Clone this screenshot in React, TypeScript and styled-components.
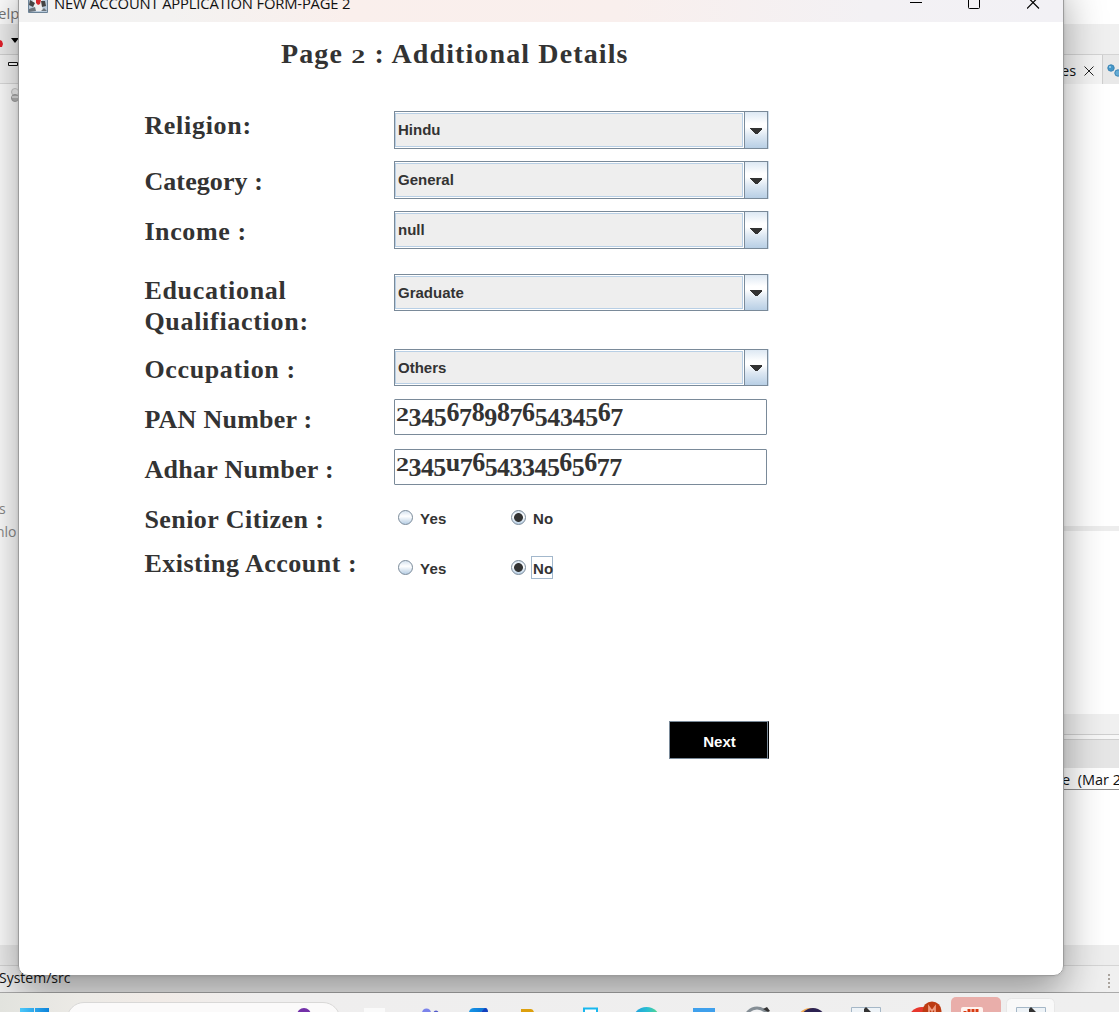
import React from 'react';
import styled, { createGlobalStyle } from 'styled-components';

const Global = createGlobalStyle`
  html, body { margin: 0; padding: 0; overflow: hidden; }
  * { box-sizing: border-box; }
`;

const ui = `"Open Sans", "Noto Sans", sans-serif`;
const serif = `"Liberation Serif", serif`;
const swing = `"Liberation Sans", Arial, sans-serif`;

const Screen = styled.div`
  position: relative;
  width: 1119px;
  height: 1012px;
  overflow: hidden;
  background: #fff;
  font-family: ${ui};
`;

const Ide = styled.div`
  display: flex;
  flex-direction: column;
  height: 993px;
`;

const Strip = styled.div<{ $h: number; $bg?: string; $line?: string }>`
  display: flex;
  flex: none;
  justify-content: space-between;
  align-items: center;
  height: ${(p) => p.$h}px;
  background: ${(p) => p.$bg ?? 'transparent'};
  border-bottom: ${(p) => (p.$line ? `1px solid ${p.$line}` : 'none')};
`;

const SideText = styled.span<{ $color?: string; $shift?: number; $size?: number }>`
  font-size: ${(p) => p.$size ?? 15}px;
  line-height: 20px;
  white-space: pre;
  color: ${(p) => p.$color ?? '#111'};
  margin-left: ${(p) => p.$shift ?? 0}px;
`;

const MenuText = styled(SideText)`
  padding-top: 2px;
`;

const Explorer = styled.div`
  display: flex;
  flex-direction: column;
  align-items: flex-start;
  align-self: flex-start;
  padding-top: 415px;
  gap: 3px;
`;

const ViewTabs = styled.div`
  display: flex;
  align-items: stretch;
  height: 29px;
  width: 57px;
`;

const ActiveTab = styled.div`
  display: flex;
  flex: none;
  align-items: center;
  width: 41px;
  gap: 8px;
  padding-top: 3px;
  background: #f5f5f5;
  border-right: 1px solid #cfcfcf;
`;

const NextTab = styled.div`
  flex: none;
  width: 16px;
  overflow: hidden;
  padding: 9px 0 0 4px;
  line-height: 0;
  background: #e9e9e9;
`;

const Console = styled.div`
  width: 57px;
  overflow: hidden;
`;

const Grip = styled.div`
  display: grid;
  gap: 2px;
  padding: 3px 9px 0 0;
  i { width: 2px; height: 2px; background: #aaa49e; }
`;

const Window = styled.div`
  position: absolute;
  left: 18px;
  top: -24px;
  width: 1046px;
  height: 1000px;
  display: flex;
  flex-direction: column;
  overflow: hidden;
  background: #fff;
  border: 1px solid #9c9c9c;
  border-radius: 10px;
`;

const Shade = styled.div`
  position: absolute;
  left: 18px;
  top: -24px;
  width: 1046px;
  height: 1000px;
  border-radius: 10px;
  box-shadow: 0 18px 42px rgba(0, 0, 0, 0.37), 0 0 3px rgba(0, 0, 0, 0.12);
`;

const TitleBar = styled.div`
  display: flex;
  flex: none;
  align-items: flex-end;
  height: 45px;
  background: linear-gradient(90deg, #f2f2f2 0, #f3f2f1 150px, #faefec 330px, #f9efed 600px, #f3f1f4 850px, #f2f1f5 100%);
`;

const AppIcon = styled.svg`
  margin: 0 6px 9px 9px;
`;

const Caption = styled.span`
  font-size: 14.8px;
  line-height: 20px;
  letter-spacing: -0.18px;
  color: #111;
  margin-bottom: 9px;
  white-space: nowrap;
`;

const Controls = styled.div`
  display: flex;
  gap: 46px;
  margin: 0 23px 9px auto;
`;

const Content = styled.main`
  display: flex;
  flex-direction: column;
  padding-left: 125px;
`;

const Heading = styled.h1`
  margin: 15px 0 35px 137px;
  font: bold 28px/33px ${serif};
  letter-spacing: 1.12px;
  color: #333;
  white-space: nowrap;
`;

const Row = styled.div<{ $h: number }>`
  display: grid;
  grid-template-columns: 250px 376px;
  align-items: start;
  height: ${(p) => p.$h}px;
`;

const Label = styled.label<{ $top: number; $ls: number }>`
  padding: ${(p) => p.$top}px 0 0 0.4px;
  font: bold 26px/31px ${serif};
  letter-spacing: ${(p) => p.$ls}px;
  color: #333;
  white-space: nowrap;
`;

const Combo = styled.div<{ $h: number }>`
  display: flex;
  width: 374px;
  height: ${(p) => p.$h}px;
  margin-top: 6px;
  border: 1px solid #7a8a99;
  box-shadow: 1px 0 0 #cfdeec;
`;

const ComboValue = styled.div`
  flex: 1;
  display: flex;
  align-items: center;
  margin: 1px 1px 1px 0;
  border: 1px solid #b8cfe5;
  background: #eee;
  padding: 0 0 0 2px;
  font: bold 15px/18px ${swing};
  color: #333;
`;

const ComboArrow = styled.div`
  display: flex;
  align-items: center;
  justify-content: center;
  width: 23px;
  padding: 1px 1px 0 0;
  border-left: 1px solid #7a8a99;
  background: linear-gradient(#dde8f3 0, #fff 32%, #fff 42%, #dce7f2 66%, #b8cfe5 100%);
`;

const Input = styled.div<{ $ls: number }>`
  width: 373px;
  height: 36px;
  margin-top: 6px;
  padding: 0 0 0 1px;
  border: 1px solid #7a8a99;
  border-radius: 1px;
  font: bold 26px/26px ${serif};
  letter-spacing: ${(p) => p.$ls}px;
  color: #333;
  white-space: nowrap;
`;

/* Old-style figures: 0-2 sit at x-height, 3 4 5 7 9 hang below the line. */
const Figure = styled.span<{ $kind: 'small' | 'low' | 'high' }>`
  display: inline-block;
  line-height: 24px;
  transform-origin: 50% 86%;
  transform: ${(p) =>
    p.$kind === 'small' ? 'scale(1, 0.7)' : p.$kind === 'low' ? 'translateY(5px)' : 'scale(1, 1.02)'};
`;

const Radios = styled.div`
  display: flex;
  align-items: center;
  height: 24px;
  margin: 13px 0 0 4px;
`;

const Choice = styled.div`
  display: flex;
  align-items: center;
  width: 113px;
  gap: 5px;
`;

const Dot = styled.span<{ $on?: boolean }>`
  width: 15px;
  height: 15px;
  margin-bottom: 1px;
  border: 1px solid #7a8a99;
  border-radius: 50%;
  background: ${(p) => (p.$on ? 'radial-gradient(circle, #333 0 4px, transparent 4.8px),' : '')}
    linear-gradient(#d6e3f0, #fff 40%, #b8cfe5);
`;

const ChoiceText = styled.span<{ $focus?: boolean }>`
  width: ${(p) => (p.$focus ? '22px' : 'auto')};
  height: 23px;
  margin-bottom: 2px;
  padding: 2px 0 0 1px;
  border: 1px solid ${(p) => (p.$focus ? '#a3b8cc' : 'transparent')};
  font: bold 15px/20px ${swing};
  letter-spacing: 0.2px;
  color: #333;
`;

const NextButton = styled.button`
  width: 100px;
  height: 38px;
  margin: 123px 0 0 525px;
  padding: 4px 0 0 1px;
  border: 1px solid #7a8a99;
  border-right-color: #000;
  box-shadow: inset -1px 0 0 #7a8a99;
  background: #000;
  color: #fff;
  font: bold 15px/18px ${swing};
`;

const Taskbar = styled.div`
  position: relative;
  height: 19px;
  overflow: hidden;
  background: linear-gradient(90deg, #e2e3de, #eceae6 80px, #f1ebe7 160px, #efeeee 260px, #efefef);
  svg { display: block; }
`;

/* Status text is painted above the dialog and its drop shadow. */
const Overlay = styled.div`
  position: absolute;
  z-index: 1;
  left: 0;
  top: 966px;
`;

const PackageMark = styled.svg`
  position: absolute;
  left: 10px;
  top: 88px;
`;

function OldStyle({ text }: { text: string }) {
  return (
    <>
      {[...text].map((c, i) => {
        if (c < '0' || c > '9') return <React.Fragment key={i}>{c}</React.Fragment>;
        const kind = '012'.includes(c) ? 'small' : '34579'.includes(c) ? 'low' : 'high';
        return <Figure key={i} $kind={kind}>{c}</Figure>;
      })}
    </>
  );
}

function Select({ value, h }: { value: string; h: number }) {
  return (
    <Combo $h={h}>
      <ComboValue>{value}</ComboValue>
      <ComboArrow>
        <svg width="12" height="6" shapeRendering="crispEdges"><path d="M0 0h12v1L7 6H5L0 1z" fill="#333" /></svg>
      </ComboArrow>
    </Combo>
  );
}

function YesNo({ focus }: { focus?: boolean }) {
  return (
    <Radios>
      <Choice><Dot /><ChoiceText>Yes</ChoiceText></Choice>
      <Choice><Dot $on /><ChoiceText $focus={focus}>No</ChoiceText></Choice>
    </Radios>
  );
}

function TaskIcons() {
  return (
    <svg width="1119" height="19">
      <defs>
        <linearGradient id="win"><stop stopColor="#4cc8fa" /><stop offset="1" stopColor="#0c83da" /></linearGradient>
        <linearGradient id="edge"><stop stopColor="#1e9be0" /><stop offset=".55" stopColor="#2bc0d0" /><stop offset="1" stopColor="#5edb79" /></linearGradient>
        <linearGradient id="book"><stop stopColor="#1797e8" /><stop offset="1" stopColor="#0b6fd0" /></linearGradient>
      </defs>
      <path d="M20 15h14v4H20zM35 15h14v4H35z" fill="url(#win)" />
      <rect x="67" y="9.500" width="273" height="34" rx="17" fill="#fbfafa" stroke="#d9d8d7" />
      <circle cx="304" cy="22" r="7" fill="#7330a8" />
      <path d="M364 15h21v4h-21z" fill="#fafafa" />
      <circle cx="426.500" cy="20" r="4.500" fill="#7b83eb" /><circle cx="436" cy="20" r="2.500" fill="#5059c9" />
      <path d="M469 19q1-4 5-4h13l-6 4z" fill="url(#book)" /><path d="M481 19l4-4q3 0 3 4z" fill="#1340be" />
      <path d="M521 16h10q2 0 3 3h-13z" fill="#dda00e" />
      <path d="M584 20v-4.500h13V20" fill="#fff" stroke="#18b7ee" strokeWidth="2" />
      <circle cx="646.500" cy="28" r="14" fill="url(#edge)" />
      <path d="M693 15h22v4h-22z" fill="#3fa0ec" />
      <circle cx="757" cy="27" r="12" fill="#f0f1f2" stroke="#858e95" strokeWidth="3" /><path d="M763 16l4-2 3 4-2 1z" fill="#333" />
      <circle cx="810" cy="28" r="13" fill="#f4ad57" /><circle cx="813" cy="28" r="13" fill="#2c2251" />
      <path d="M851.500 20v-5.500h29V20" fill="#eef3f7" stroke="#a5b7c7" /><path d="M864 19v-3l2-2 5 5z" fill="#333" />
      <circle cx="922" cy="28" r="14" fill="#e8372c" /><circle cx="932" cy="18" r="9.500" fill="#bd3b12" />
      <path d="M929 20v-6l3 4 3-4v6" fill="none" stroke="#ef9b7f" strokeWidth="1.800" />
      <rect x="951" y="4" width="50" height="24" rx="5" fill="#e9aeaa" /><rect x="961" y="14" width="22" height="12" rx="2" fill="#fff3ef" />
      <path d="M965 19v-1M969 19v-3M973 19v-3M977 19v-3" stroke="#d83b12" strokeWidth="3" />
      <rect x="1006.500" y="5.500" width="48" height="24" rx="5" fill="#f9f9f9" stroke="#e7e7e7" />
      <path d="M1016.500 20v-5.500h29V20" fill="#eef3f7" stroke="#a5b7c7" /><path d="M1029 19v-3l2-2 5 5z" fill="#333" />
    </svg>
  );
}

export default function App() {
  return (
    <Screen>
      <Global />
      <Ide>
        <Strip $h={24}><MenuText $color="#777" $shift={-2}>elp</MenuText></Strip>
        <Strip $h={31} $bg="#f0f0f0" $line="#d4d4d4">
          <svg width="19" height="30"><path d="M0 16l2 1 1 3-1 3H0z" fill="#e5202b" /><path d="M11 14h8l-4 5z" fill="#000" /></svg>
        </Strip>
        <Strip $h={29} $bg="#f7f7f7" $line="#ddd">
          <svg width="19" height="28"><path d="M8.500 7.500h9v3h-9z" fill="#fff" stroke="#111" /></svg>
          <ViewTabs>
            <ActiveTab>
              <SideText $size={14.5} $shift={-1}>es</SideText>
              <svg width="10" height="10"><path d="M.5.5l9 9M9.500.5l-9 9" stroke="#222" strokeWidth="1" /></svg>
            </ActiveTab>
            <NextTab>
              <svg width="14" height="14"><circle cx="4" cy="4" r="3.200" fill="#4597c8" stroke="#3b86b6" /><circle cx="11" cy="9" r="3.200" fill="#66acd5" stroke="#3b86b6" /><circle cx="3" cy="3" r="1" fill="#aad4ed" /></svg>
            </NextTab>
          </ViewTabs>
        </Strip>
        <Strip $h={442}>
          <Explorer>
            <SideText $color="#8a8a8a" $shift={-1} $size={14}>s</SideText>
            <SideText $color="#8a8a8a" $shift={-4} $size={14}>nlo</SideText>
          </Explorer>
        </Strip>
        <Strip $h={5}><span /><svg width="57" height="5"><path d="M0 0h57v5H0z" fill="#ededed" /></svg></Strip>
        <Strip $h={183} />
        <Strip $h={21}><span /><svg width="57" height="21"><path d="M0 0h57v20H0z" fill="#f0f0f0" /><path d="M0 20h57v1H0z" fill="#cfcfcf" /></svg></Strip>
        <Strip $h={5}><span /><svg width="57" height="5"><path d="M0 0h57v4H0z" fill="#f7f7f7" /><path d="M0 4h57v1H0z" fill="#cfcfcf" /></svg></Strip>
        <Strip $h={28}><span /><svg width="57" height="28"><path d="M0 0h57v28H0z" fill="#e6e6e6" /></svg></Strip>
        <Strip $h={21}><span /><Console><SideText $size={14.5} $shift={0}>e  (Mar 2</SideText></Console></Strip>
        <Strip $h={156}><span /><svg width="57" height="156"><path d="M0 0h57v1H0z" fill="#8f8f8f" /></svg></Strip>
        <Strip $h={21} $bg="#eee" $line="#d5d5d5" />
        <Strip $h={27} $bg="#f0f0f0" $line="#aaa">
          <span />
          <Grip><i /><i /><i /><i /></Grip>
        </Strip>
      </Ide>
      <Shade />
      <Overlay>
        <SideText $size={14} $shift={-1}>System/src</SideText>
      </Overlay>
      <PackageMark width="9" height="15">
        <circle cx="5" cy="4" r="3.500" fill="#ccc" stroke="#aaa" /><circle cx="5" cy="10" r="3.500" fill="#999" stroke="#888" /><path d="M2 9h6" stroke="#ddd" />
      </PackageMark>
      <Window>
        <TitleBar>
          <AppIcon width="20" height="22">
            <path d="M.5.5h19v21H.5z" fill="#b9cbdc" stroke="#6d8498" />
            <path d="M4 20l2-5-3-3 4-6 6 1 3 6-2 4 2 3z" fill="#eee" />
            <path d="M2 9l5 3-2 4-4-2zM13 10l4 0 1 5-4 1z" fill="#444" />
            <path d="M8 9h5l-1 4-2 1-2-2z" fill="#d5262b" /><path d="M1 18l6-2 1 4-7 1zM13 20l3-3 3 3z" fill="#6c747b" />
          </AppIcon>
          <Caption>NEW ACCOUNT APPLICATION FORM-PAGE 2</Caption>
          <Controls>
            <svg width="13" height="13"><path d="M1 2.500h12" stroke="#000" /></svg>
            <svg width="13" height="13"><rect x=".5" y="-3" width="11" height="11.500" rx="1" fill="none" stroke="#000" /></svg>
            <svg width="13" height="13"><path d="M0-3.500l12 12M12-3.500l-12 12" stroke="#000" strokeWidth="1.200" /></svg>
          </Controls>
        </TitleBar>
        <Content>
          <Heading>Page <OldStyle text="2" /> : Additional Details</Heading>
          <Row $h={50}><Label $top={5} $ls={0.7}>Religion:</Label><Select value="Hindu" h={38} /></Row>
          <Row $h={50}><Label $top={11} $ls={0.1}>Category :</Label><Select value="General" h={38} /></Row>
          <Row $h={63}><Label $top={11} $ls={0.6}>Income :</Label><Select value="null" h={38} /></Row>
          <Row $h={75}><Label $top={7} $ls={0.7}>Educational<br />Qualifiaction:</Label><Select value="Graduate" h={37} /></Row>
          <Row $h={50}><Label $top={11} $ls={0.65}>Occupation :</Label><Select value="Others" h={37} /></Row>
          <Row $h={50}><Label $top={11} $ls={0.25}>PAN Number :</Label><Input $ls={-0.4}><OldStyle text="234567898765434567" /></Input></Row>
          <Row $h={50}><Label $top={11} $ls={0.3}>Adhar Number :</Label><Input $ls={-0.56}><OldStyle text="2345u7654334565677" /></Input></Row>
          <Row $h={50}><Label $top={11} $ls={0.45}>Senior Citizen :</Label><YesNo /></Row>
          <Row $h={55}><Label $top={5} $ls={0.5}>Existing Account :</Label><YesNo focus /></Row>
          <NextButton>Next</NextButton>
        </Content>
      </Window>
      <Taskbar><TaskIcons /></Taskbar>
    </Screen>
  );
}
